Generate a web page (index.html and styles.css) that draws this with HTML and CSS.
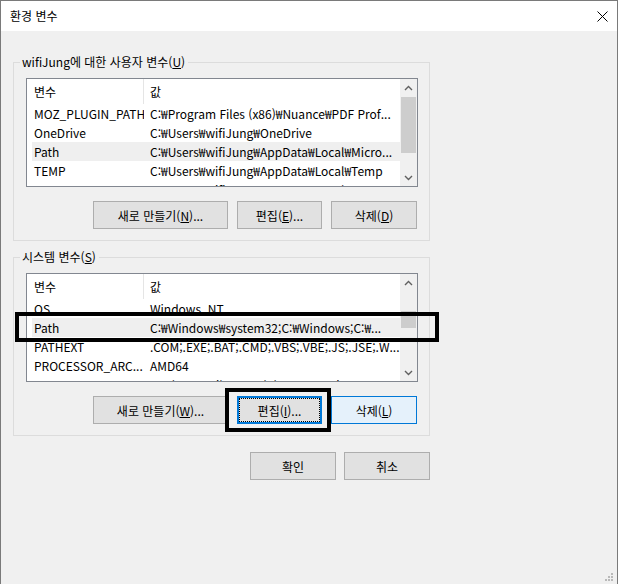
FILE: index.html
```html
<!DOCTYPE html>
<html lang="ko">
<head>
<meta charset="utf-8">
<title>환경 변수</title>
<link rel="stylesheet" href="styles.css">
</head>
<body>
<div class="window">
  <div class="titlebar">
    <span class="title">환경 변수</span>
    <svg class="close" width="11" height="11" viewBox="0 0 11 11"><path d="M0.5 0.5 L10.5 10.5 M10.5 0.5 L0.5 10.5" stroke="#000" stroke-width="1" fill="none"/></svg>
  </div>
  <div class="content">
    <fieldset class="group">
      <legend>wifiJung에 대한 사용자 변수(<u>U</u>)</legend>
      <div class="list">
        <div class="list-body">
          <div class="row header"><span class="c1">변수</span><span class="c2">값</span></div>
          <div class="row"><span class="c1">MOZ_PLUGIN_PATH</span><span class="c2">C:₩Program Files (x86)₩Nuance₩PDF Prof...</span></div>
          <div class="row"><span class="c1">OneDrive</span><span class="c2">C:₩Users₩wifiJung₩OneDrive</span></div>
          <div class="row sel"><span class="c1">Path</span><span class="c2">C:₩Users₩wifiJung₩AppData₩Local₩Micro...</span></div>
          <div class="row"><span class="c1">TEMP</span><span class="c2">C:₩Users₩wifiJung₩AppData₩Local₩Temp</span></div>
          <div class="row"><span class="c1">TMP</span><span class="c2">C:₩Users₩wifiJung₩AppData₩Local₩Temp</span></div>
        </div>
        <div class="scrollbar">
          <div class="sb-btn"><svg width="9" height="6" viewBox="0 0 9 6"><path d="M1 5 L4.5 1.5 L8 5" stroke="#606060" stroke-width="1.4" fill="none"/></svg></div>
          <div class="sb-track"><div class="thumb thumb-user"></div></div>
          <div class="sb-btn"><svg width="9" height="6" viewBox="0 0 9 6"><path d="M1 1 L4.5 4.5 L8 1" stroke="#606060" stroke-width="1.4" fill="none"/></svg></div>
        </div>
      </div>
      <div class="buttons">
        <button class="btn btn-wide">새로 만들기(<u>N</u>)...</button>
        <button class="btn btn-mid">편집(<u>E</u>)...</button>
        <button class="btn btn-std">삭제(<u>D</u>)</button>
      </div>
    </fieldset>

    <fieldset class="group group-system">
      <legend>시스템 변수(<u>S</u>)</legend>
      <div class="list">
        <div class="list-body">
          <div class="row header"><span class="c1">변수</span><span class="c2">값</span></div>
          <div class="row"><span class="c1">OS</span><span class="c2">Windows_NT</span></div>
          <div class="row sel"><span class="c1">Path</span><span class="c2">C:₩Windows₩system32;C:₩Windows;C:₩...</span></div>
          <div class="row"><span class="c1">PATHEXT</span><span class="c2">.COM;.EXE;.BAT;.CMD;.VBS;.VBE;.JS;.JSE;.W...</span></div>
          <div class="row"><span class="c1">PROCESSOR_ARC...</span><span class="c2">AMD64</span></div>
          <div class="row"><span class="c1">PROCESSOR_IDE...</span><span class="c2">Intel64 Family 6 Model 158 Stepping 10...</span></div>
        </div>
        <div class="scrollbar">
          <div class="sb-btn"><svg width="9" height="6" viewBox="0 0 9 6"><path d="M1 5 L4.5 1.5 L8 5" stroke="#606060" stroke-width="1.4" fill="none"/></svg></div>
          <div class="sb-track"><div class="thumb thumb-system"></div></div>
          <div class="sb-btn"><svg width="9" height="6" viewBox="0 0 9 6"><path d="M1 1 L4.5 4.5 L8 1" stroke="#606060" stroke-width="1.4" fill="none"/></svg></div>
        </div>
      </div>
      <div class="buttons">
        <button class="btn btn-wide">새로 만들기(<u>W</u>)...</button>
        <button class="btn btn-mid btn-focus">편집(<u>I</u>)...</button>
        <button class="btn btn-std btn-hover">삭제(<u>L</u>)</button>
      </div>
    </fieldset>

    <div class="dialog-buttons">
      <button class="btn btn-std">확인</button>
      <button class="btn btn-std">취소</button>
    </div>
  </div>

  <div class="annot annot-path"></div>
  <div class="annot annot-edit"></div>

  <svg class="grip" width="9" height="9" viewBox="0 0 9 9">
    <rect x="6" y="0" width="2" height="2" fill="#b9b9b9"/>
    <rect x="3" y="3" width="2" height="2" fill="#b9b9b9"/>
    <rect x="6" y="3" width="2" height="2" fill="#b9b9b9"/>
    <rect x="0" y="6" width="2" height="2" fill="#b9b9b9"/>
    <rect x="3" y="6" width="2" height="2" fill="#b9b9b9"/>
    <rect x="6" y="6" width="2" height="2" fill="#b9b9b9"/>
  </svg>
</div>
</body>
</html>
```

FILE: styles.css
```css
html, body {
  margin: 0;
  padding: 0;
  overflow: hidden;
  background: #f0f0f0;
}

.window {
  position: relative;
  width: 618px;
  height: 584px;
  box-sizing: border-box;
  border: 1px solid #7a7a7a;
  border-bottom: none;
  background: #f0f0f0;
  font-family: "Noto Sans CJK KR", sans-serif;
  font-size: 12px;
  color: #000;
}

.titlebar {
  height: 30px;
  background: #fff;
  display: flex;
  align-items: center;
  justify-content: space-between;
  padding: 0 9px 0 9px;
}

.title {
  line-height: 16px;
}

.close {
  display: block;
}

.content {
  padding: 23px 0 0 12px;
}

.group {
  width: 417px;
  box-sizing: border-box;
  margin: 0;
  min-width: 0;
  padding: 8px 11px 11px 12px;
  border: 1px solid #dcdcdc;
}

.group-system {
  margin-top: 8px;
}

.group legend {
  padding: 0 3px 0 2px;
  margin-left: -6px;
  line-height: 16px;
}

.list {
  display: flex;
  width: 392px;
  height: 109px;
  box-sizing: border-box;
  border: 1px solid #828790;
  background: #fff;
}

.list-body {
  flex: 1;
  min-width: 0;
  overflow: hidden;
}

.row {
  display: flex;
  align-items: center;
  height: 19px;
  white-space: nowrap;
}

.row.header {
  height: 25px;
}

.row.sel {
  background: linear-gradient(to right, transparent 5px, #efefef 5px);
}

.c1 {
  width: 117px;
  flex: none;
  box-sizing: border-box;
  padding-left: 7px;
  overflow: hidden;
  align-self: stretch;
  display: flex;
  align-items: center;
}

.header .c1 {
  border-right: 1px solid #e5e5e5;
}

.c2 {
  flex: 1;
  min-width: 0;
  padding-left: 6px;
  overflow: hidden;
}

.scrollbar {
  width: 17px;
  flex: none;
  background: #f0f0f0;
  display: flex;
  flex-direction: column;
}

.sb-btn {
  height: 17px;
  display: flex;
  align-items: center;
  justify-content: center;
}

.sb-btn svg {
  display: block;
}

.sb-track {
  flex: 1;
}

.thumb {
  margin: 0 1px;
  background: #cdcdcd;
}

.thumb-user {
  margin-top: 1px;
  height: 56px;
}

.thumb-system {
  margin-top: 20px;
  height: 17px;
}

.buttons {
  display: flex;
  justify-content: flex-end;
  gap: 9px;
  margin-top: 14px;
  padding-right: 1px;
}

.btn {
  height: 28px;
  box-sizing: border-box;
  border: 1px solid #adadad;
  background: #e1e1e1;
  font-family: inherit;
  font-size: 12px;
  color: #000;
  padding: 0;
  margin: 0;
}

.btn u {
  text-decoration-thickness: 1px;
}

.btn-wide { width: 135px; }
.btn-mid { width: 85px; }
.btn-std { width: 86px; }

.btn-hover {
  background: #e5f1fb;
  border-color: #0078d7;
}

.btn-focus {
  position: relative;
  border: 2px solid #0078d7;
}

.btn-focus::after {
  content: "";
  position: absolute;
  inset: 0;
  border: 1px dotted #000;
}

.dialog-buttons {
  width: 417px;
  display: flex;
  justify-content: flex-end;
  gap: 8px;
  margin-top: 16px;
}

.annot {
  position: absolute;
  box-sizing: border-box;
  border: 4px solid #000;
}

.annot-path {
  left: 14px;
  top: 311px;
  width: 424px;
  height: 30px;
}

.annot-edit {
  left: 224px;
  top: 387px;
  width: 106px;
  height: 44px;
}

.grip {
  position: absolute;
  right: 3px;
  bottom: 2px;
}
```
